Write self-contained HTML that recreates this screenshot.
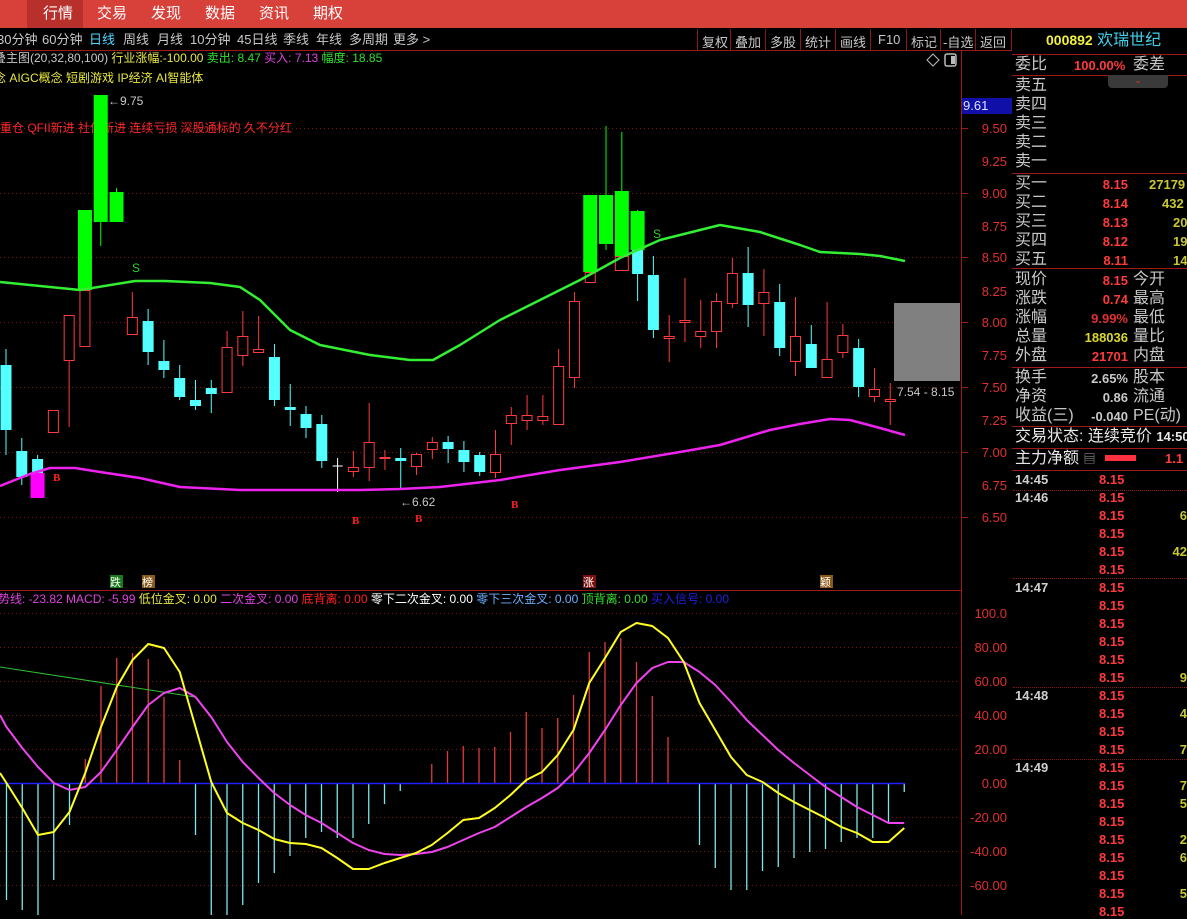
<!DOCTYPE html>
<html><head><meta charset="utf-8">
<style>
*{margin:0;padding:0;box-sizing:border-box}
body{width:1187px;height:915px;background:#000;overflow:hidden;position:relative;font-family:"Liberation Sans","Noto Sans CJK SC",sans-serif;color:#c8c8c8}
.a{position:absolute;white-space:nowrap;line-height:1}
#top{position:absolute;left:0;top:0;width:1187px;height:28px;background:#d8403a}
.tab{position:absolute;top:6px;font-size:15px;color:#fff}
.r2{font-size:13px;top:33px;color:#c8c8c8}
.tb{position:absolute;top:29px;height:21px;border-left:1px solid #8a1a1a;font-size:13px;color:#c8c8c8;padding:3px 0 0 4px}
.pl{font-size:16px;color:#c8c8c8}
.num{font-family:"Liberation Sans",sans-serif;font-weight:bold;font-size:13px}
.hl{position:absolute;left:1012px;width:175px;height:1px;background:#a01818}
.red{color:#ff3b3b}.yel{color:#d8d830}
</style></head><body>
<div id="top"></div>
<div class="a" style="left:27px;top:0;width:56px;height:28px;background:#b8302c"></div>
<div class="a tab" style="left:43px">行情</div>
<div class="a tab" style="left:97px">交易</div>
<div class="a tab" style="left:151px">发现</div>
<div class="a tab" style="left:205px">数据</div>
<div class="a tab" style="left:259px">资讯</div>
<div class="a tab" style="left:313px">期权</div>

<div class="a r2" style="left:-3px">30分钟</div>
<div class="a r2" style="left:42px">60分钟</div>
<div class="a r2" style="left:89px;color:#4fd8ff">日线</div>
<div class="a r2" style="left:123px">周线</div>
<div class="a r2" style="left:157px">月线</div>
<div class="a r2" style="left:190px">10分钟</div>
<div class="a r2" style="left:237px">45日线</div>
<div class="a r2" style="left:283px">季线</div>
<div class="a r2" style="left:316px">年线</div>
<div class="a r2" style="left:349px">多周期</div>
<div class="a r2" style="left:393px">更多 &gt;</div>

<div class="tb" style="left:697px;width:33px">复权</div>
<div class="tb" style="left:730px;width:35px">叠加</div>
<div class="tb" style="left:765px;width:35px">多股</div>
<div class="tb" style="left:800px;width:35px">统计</div>
<div class="tb" style="left:835px;width:35px">画线</div>
<div class="tb" style="left:870px;width:36px;padding-left:7px">F10</div>
<div class="tb" style="left:906px;width:34px">标记</div>
<div class="tb" style="left:940px;width:35px;padding-left:2px">-自选</div>
<div class="tb" style="left:975px;width:37px;border-right:1px solid #8a1a1a">返回</div>
<div class="a" style="left:0;top:50px;width:1012px;height:1px;background:#a01818"></div>

<div class="a" style="left:-6px;top:52px;font-size:12px;color:#c8c8c8">叠主图(20,32,80,100) <span style="color:#e8e840">行业涨幅:-100.00</span> <span style="color:#30e030">卖出: 8.47</span> <span style="color:#e040e0">买入: 7.13</span> <span style="color:#30e030">幅度: 18.85</span></div>
<div class="a" style="left:-6px;top:72px;font-size:12px;color:#e8e840">念 AIGC概念 短剧游戏 IP经济 AI智能体</div>
<div class="a" style="left:0;top:122px;font-size:12px;color:#ff2a2a">重仓 QFII新进 社保新进 连续亏损 深股通标的 久不分红</div>

<svg class="a" style="left:0;top:0" width="1012" height="915" id="ch">
<g stroke="#7a1515" stroke-dasharray="1,3" stroke-width="1">
<line x1="0" y1="128.5" x2="960" y2="128.5"/><line x1="0" y1="193.5" x2="960" y2="193.5"/><line x1="0" y1="257.5" x2="960" y2="257.5"/><line x1="0" y1="322.5" x2="960" y2="322.5"/><line x1="0" y1="387.5" x2="960" y2="387.5"/><line x1="0" y1="452.5" x2="960" y2="452.5"/><line x1="0" y1="517.5" x2="960" y2="517.5"/>
<line x1="0" y1="613.5" x2="960" y2="613.5"/><line x1="0" y1="647.5" x2="960" y2="647.5"/><line x1="0" y1="681.5" x2="960" y2="681.5"/><line x1="0" y1="715.5" x2="960" y2="715.5"/><line x1="0" y1="749.5" x2="960" y2="749.5"/><line x1="0" y1="817.5" x2="960" y2="817.5"/><line x1="0" y1="851.5" x2="960" y2="851.5"/><line x1="0" y1="885.5" x2="960" y2="885.5"/>
</g>
<line x1="961.5" y1="50" x2="961.5" y2="915" stroke="#a01818"/>
<line x1="0" y1="590.5" x2="961" y2="590.5" stroke="#a01818"/>
<line x1="1012.5" y1="28" x2="1012.5" y2="915" stroke="#a01818"/>
<g stroke="#a01818"><line x1="962" y1="128.5" x2="968" y2="128.5"/><line x1="962" y1="193.5" x2="968" y2="193.5"/><line x1="962" y1="257.5" x2="968" y2="257.5"/><line x1="962" y1="322.5" x2="968" y2="322.5"/><line x1="962" y1="387.5" x2="968" y2="387.5"/><line x1="962" y1="452.5" x2="968" y2="452.5"/><line x1="962" y1="517.5" x2="968" y2="517.5"/></g>
<g id="cg"></g>
<g font-family="Liberation Sans" font-size="13" fill="#e03030" text-anchor="end">
<text x="1007" y="133">9.50</text><text x="1007" y="166">9.25</text><text x="1007" y="198">9.00</text><text x="1007" y="231">8.75</text><text x="1007" y="262">8.50</text><text x="1007" y="296">8.25</text><text x="1007" y="327">8.00</text><text x="1007" y="360">7.75</text><text x="1007" y="392">7.50</text><text x="1007" y="425">7.25</text><text x="1007" y="457">7.00</text><text x="1007" y="490">6.75</text><text x="1007" y="522">6.50</text>
<text x="1007" y="618">100.0</text><text x="1007" y="652">80.00</text><text x="1007" y="686">60.00</text><text x="1007" y="720">40.00</text><text x="1007" y="754">20.00</text><text x="1007" y="788">0.00</text><text x="1007" y="822">-20.00</text><text x="1007" y="856">-40.00</text><text x="1007" y="890">-60.00</text>
</g>
<rect x="962" y="98" width="50" height="16" fill="#1010a8"/>
<text x="963" y="110" font-family="Liberation Sans" font-size="13" fill="#e0e0ff">9.61</text>
<path d="M933 54 L939 60 L933 66 L927 60Z" fill="none" stroke="#bbb"/>
<rect x="945" y="54" width="11" height="12" rx="2" fill="none" stroke="#bbb" stroke-width="1.5"/><rect x="951" y="56" width="4" height="8" fill="#bbb"/>
<rect x="894" y="303" width="66" height="78" fill="#808080"/>
<text x="897" y="396" font-family="Liberation Sans" font-size="12" fill="#c8c8c8">7.54 - 8.15</text>
<text x="108" y="105" font-family="Liberation Sans" font-size="12" fill="#c8c8c8">←9.75</text>
<text x="400" y="506" font-family="Liberation Sans" font-size="12" fill="#c8c8c8">←6.62</text>
<g font-family="Liberation Serif" font-weight="bold" font-size="11" fill="#ff2020">
<text x="53" y="481">B</text><text x="352" y="524">B</text><text x="415" y="522">B</text><text x="511" y="508">B</text></g>
<g font-family="Liberation Sans" font-size="12" fill="#30d030"><text x="132" y="272">S</text><text x="653" y="238">S</text></g>
<g font-size="11" font-family="Noto Sans CJK SC,sans-serif" fill="#fff">
<rect x="110" y="575" width="13" height="13" fill="#1a7a1a"/><text x="110" y="586">跌</text>
<rect x="142" y="575" width="13" height="13" fill="#8a5a1a"/><text x="142" y="586">榜</text>
<rect x="583" y="575" width="13" height="13" fill="#7a1010"/><text x="583" y="586">涨</text>
<rect x="820" y="575" width="13" height="13" fill="#8a5a1a"/><text x="820" y="586">颖</text>
</g>
</svg>

<div class="a" style="left:-2px;top:593px;font-size:12px;color:#e040e0">势线: -23.82 MACD: -5.99 <span style="color:#e8e840">低位金叉: 0.00</span> <span style="color:#e040e0">二次金叉: 0.00</span> <span style="color:#ff2020">底背离: 0.00</span> <span style="color:#fff">零下二次金叉: 0.00</span> <span style="color:#6ab0ff">零下三次金叉: 0.00</span> <span style="color:#30e030">顶背离: 0.00</span> <span style="color:#2020e0">买入信号: 0.00</span></div>

<div class="a" style="left:1046px;top:33px;font-size:16px"><span class="num yel" style="font-size:14px;color:#f0f040">000892</span> <span style="color:#40d0e8">欢瑞世纪</span></div>
<div class="hl" style="top:54px"></div><div class="hl" style="top:75px"></div>
<div class="a pl" style="left:1015px;top:57px">委比</div>
<div class="a num red" style="left:1074px;top:59px">100.00%</div>
<div class="a pl" style="left:1133px;top:57px">委差</div>
<div class="a" style="left:1108px;top:75px;width:60px;height:13px;background:#3a3a3a;border-radius:0 0 4px 4px;color:#e03030;font-size:9px;text-align:center;line-height:11px">⌄</div>
<div class="a pl" style="left:1015px;top:78px">卖五</div>
<div class="a pl" style="left:1015px;top:97px">卖四</div>
<div class="a pl" style="left:1015px;top:116px">卖三</div>
<div class="a pl" style="left:1015px;top:135px">卖二</div>
<div class="a pl" style="left:1015px;top:154px">卖一</div>
<div class="hl" style="top:173px"></div>
<div id="rp"></div>
<div class="hl" style="top:268px"></div><div class="hl" style="top:367px"></div><div class="hl" style="top:426px"></div><div class="hl" style="top:448px"></div><div class="hl" style="top:470px"></div>
<div class="a pl" style="left:1015px;top:429px;color:#e8e8e8">交易状态: 连续竞价 <span class="num" style="font-size:13px">14:50</span></div>
<div class="a pl" style="left:1015px;top:451px;color:#e8e8e8">主力净额 <span style="font-size:12px;color:#aaa">▤</span></div>
<div class="a" style="left:1105px;top:455px;width:31px;height:6px;background:#ff3040"></div>
<div class="a num red" style="left:1165px;top:452px">1.1</div>
<div id="tk"></div>

<script>
var NS="http://www.w3.org/2000/svg",g=document.getElementById('cg');
function el(t,a){var e=document.createElementNS(NS,t);for(var k in a)e.setAttribute(k,a[k]);g.appendChild(e);return e}
function X(i){return 6+i*15.79}
var up=[[0,282],[30,285],[80,290],[135,281],[165,281],[210,283],[240,287],[260,300],[290,330],[320,345],[370,355],[410,360],[433,360],[460,345],[500,320],[540,300],[580,280],[620,258],[660,240],[700,230],[720,225],[760,232],[800,245],[820,252],[860,254],[880,256],[905,261]];
var lo=[[0,486],[30,474],[50,468],[75,468],[100,472],[140,478],[180,487],[240,490],[300,490],[360,490],[400,489],[440,487],[500,480],[560,470],[620,462],[680,452],[720,445],[770,430],[800,424],[830,419],[850,420],[880,428],[905,435]];
function pl(p,c,w){el('polyline',{points:p.map(function(a){return a.join(',')}).join(' '),fill:'none',stroke:c,'stroke-width':w,'stroke-linejoin':'round'})}
var C=[['c',365,430,349,455],['c',451,477,438,485],['c',459,473,455,485],['r',410,433,410,433],['r',315,361,315,427],['r',290,347,290,347],['g',95,222,95,246],['g',192,222,188,222],['r',317,335,292,335],['c',321,352,309,365],['c',361,370,340,378],['c',378,397,365,400],['c',400,406,380,410],['c',388,394,380,413],['r',347,393,331,393],['r',336,356,311,366],['r',349,353,316,353],['c',357,400,344,406],['c',407,410,384,426],['c',414,428,406,438],['c',424,461,415,468],['w',466,467,458,492],['r',467,472,451,477],['r',442,468,403,481],['r',457,458,450,470],['c',458,461,448,490],['r',454,467,453,475],['r',442,450,437,459],['c',442,449,436,463],['c',450,462,441,472],['c',455,472,452,476],['r',454,473,430,478],['r',415,424,407,445],['r',415,421,395,430],['r',416,421,395,425],['r',366,425,349,425],['r',301,378,292,388],['g',195,272,195,283],['g',195,244,126,250],['g',191,256,132,256],['g',211,250,210,250],['c',275,330,256,338],['r',336,339,315,362],['r',320,323,278,342],['r',331,337,300,348],['r',301,332,293,348],['r',273,304,258,308],['c',273,305,247,327],['r',292,304,269,336],['c',302,348,284,356],['r',336,362,297,376],['c',344,368,325,368],['r',359,378,302,378],['r',335,353,324,358],['c',348,387,339,397],['r',389,397,368,402],['r',399,402,383,425]];
var col={r:'#ff3b3b',c:'#54ffff',g:'#00ff00',w:'#fff'};
function candle(x,t,b,wt,wb,ty,wd){var c=col[ty];wd=wd||11;
 el('line',{x1:x,y1:wt,x2:x,y2:wb,stroke:c});
 if(ty=='r'){el('rect',{x:x-wd/2+.5,y:t+.5,width:wd-1,height:Math.max(b-t-1,1),fill:'#000',stroke:c})}
 else if(ty=='w'){el('line',{x1:x-5,y1:t,x2:x+5,y2:t,stroke:c})}
 else el('rect',{x:x-wd/2,y:t,width:wd,height:Math.max(b-t,2),fill:c});}
C.forEach(function(d,i){candle(X(i),d[1],d[2],d[3],d[4],d[0],d[0]=='g'?14:11)});
candle(X(5),210,290,210,290,'g',14);
el('rect',{x:X(2)-7,y:473,width:14,height:25,fill:'#ff00ff'});
candle(X(37),272,283,272,283,'r',11);
el('rect',{x:X(39)-6.5,y:256.5,width:13,height:14,fill:'#000',stroke:'#ff3b3b'});
candle(X(40),250,274,250,301,'c',11);
pl(up,'#33ee33',2.5);pl(lo,'#ee22ee',2.5);
var H=[900,910,915,880,825,759,686,658,653,659,697,760,835,915,915,905,883,873,856,838,832,838,838,824,804,791,785,764,751,746,748,747,732,712,728,718,695,652,642,638,662,696,737,783,845,868,890,890,871,867,858,852,849,842,838,838,823,792];
H.forEach(function(v,i){var x=6.5+i*15.75;if(v==783||v==785)return;el('line',{x1:x,y1:783,x2:x,y2:v,stroke:v<783?'#e03a3a':'#7de8e8','stroke-width':1.3})});
el('line',{x1:0,y1:783.5,x2:905,y2:783.5,stroke:'#2020ff','stroke-width':1.5});
el('line',{x1:0,y1:667,x2:195,y2:697,stroke:'#30c030'});
var Y=[783,808,835,832,812,773,727,687,660,644,648,672,727,782,813,823,830,839,843,844,848,858,869,869,863,858,853,845,833,820,818,808,795,780,772,755,730,683,658,632,623,626,638,662,703,730,757,775,782,793,802,810,818,827,833,842,842,828];
var M=[727,748,767,783,790,787,772,750,727,705,693,688,697,717,742,762,778,793,805,815,823,833,843,850,854,855,854,852,847,840,833,827,817,807,798,788,773,753,730,705,683,668,662,662,672,685,702,720,735,750,763,775,787,797,807,815,823,823];
var yp=[[0,773]],mp=[[0,715]];Y.forEach(function(v,i){yp.push([6.5+i*15.75,v])});M.forEach(function(v,i){mp.push([6.5+i*15.75,v])});
pl(mp,'#ee44ee',2);pl(yp,'#ffff22',2);
var rp=document.getElementById('rp'),h='';
function row(y,l,v,vc,l2,vol,vx){h+='<div class="a pl" style="left:1015px;top:'+y+'px">'+l+'</div>';
 if(v)h+='<div class="a num" style="right:59px;top:'+(y+2)+'px;color:'+vc+'">'+v+'</div>';
 if(l2)h+='<div class="a pl" style="left:1133px;top:'+y+'px">'+l2+'</div>';
 if(vol)h+='<div class="a num" style="left:'+vx+'px;top:'+(y+2)+'px;color:#c8c832">'+vol+'</div>';}
row(176,'买一','8.15','#ff3b3b','', '27179',1149);
row(195,'买二','8.14','#ff3b3b','','432',1162);
row(214,'买三','8.13','#ff3b3b','','20',1173);
row(233,'买四','8.12','#ff3b3b','','19',1173);
row(252,'买五','8.11','#ff3b3b','','14',1173);
row(272,'现价','8.15','#ff3b3b','今开');
row(291,'涨跌','0.74','#ff3b3b','最高');
row(310,'涨幅','9.99%','#e03030','最低');
row(329,'总量','188036','#d8d830','量比');
row(348,'外盘','21701','#ff3b3b','内盘');
row(370,'换手','2.65%','#c8c8c8','股本');
row(389,'净资','0.86','#c8c8c8','流通');
row(408,'收益(三)','-0.040','#c8c8c8','PE(动)');
rp.innerHTML=h;
var t='',times={0:'14:45',1:'14:46',6:'14:47',12:'14:48',16:'14:49'};
for(var i=0;i<25;i++){var y=473+i*18;if(times[i])t+='<div class="a num" style="left:1015px;top:'+y+'px;color:#d0d0d0">'+times[i]+'</div>';
 t+='<div class="a num" style="left:1099px;top:'+y+'px;color:#ff3b3b">8.15</div>';}
var vv=[[2,'6'],[4,'42'],[11,'9'],[13,'4'],[15,'7'],[17,'7'],[18,'5'],[20,'2'],[21,'6'],[23,'5']];
vv.forEach(function(a){var y=473+a[0]*18;t+='<div class="a num" style="right:0;top:'+y+'px;color:#c8c832">'+a[1]+'</div>'});
[490,578,687,759].forEach(function(y){t+='<div class="a" style="left:1013px;top:'+y+'px;width:174px;border-top:1px dotted #8a1a1a"></div>'});
document.getElementById('tk').innerHTML=t;
</script>
</body></html>
